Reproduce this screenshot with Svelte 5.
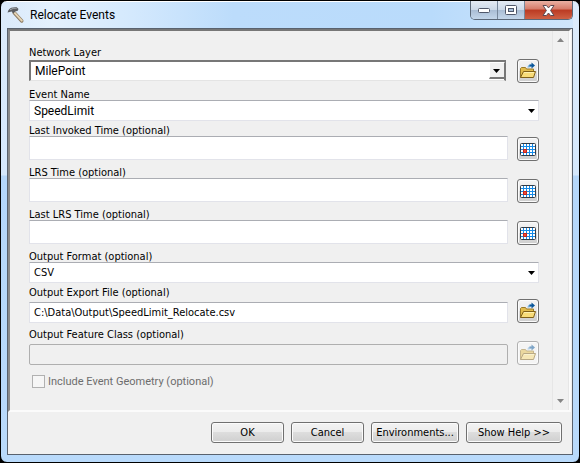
<script>
  let layer = $state('MilePoint');
  let eventName = $state('SpeedLimit');
  let format = $state('CSV');
  let exportFile = $state('C:\\Data\\Output\\SpeedLimit_Relocate.csv');
  let times = $state([
    { id: 'invoked', label: 'Last Invoked Time (optional)', value: '' },
    { id: 'lrs', label: 'LRS Time (optional)', value: '' },
    { id: 'last-lrs', label: 'Last LRS Time (optional)', value: '' }
  ]);
</script>

{#snippet folder()}
  <svg width="18" height="18" viewBox="0 0 18 18" aria-hidden="true">
    <path d="M1.5 15.5V6.5l1-1h4l1 1.5h7v3" fill="#e3bd4c" stroke="#9a7a2a" />
    <path d="M1.5 15.5 4.5 9.5h12l-2 6z" fill="#f8dc79" stroke="#806018" stroke-linejoin="round" />
    <path d="M5 10.5h10" stroke="#fff1b0" />
    <path d="M9.5 5.5C9.5 3.8 10.5 3.5 12 3.5" fill="none" stroke="#7db4de" stroke-width="2" />
    <path d="M10.5 2.5h2V.5l3.5 3-3.5 3v-2h-2z" fill="#08569b" />
  </svg>
{/snippet}

{#snippet calendar()}
  <svg width="16" height="13" viewBox="0 0 16 13" aria-hidden="true">
    <rect x=".5" y=".5" width="15" height="12" rx="1" fill="#fff" stroke="#303b47" />
    <path d="M3.5 1v11M6.5 1v11M9.5 1v11M12.5 1v11M1 3.5h14M1 6.5h14M1 9.5h14" stroke="#168be8" fill="none" />
    <rect x="3.5" y="6.5" width="3" height="3" fill="#f04a3a" stroke="#c5281c" />
  </svg>
{/snippet}

{#snippet arrow()}
  <svg class="arrow" width="7" height="4" viewBox="0 0 7 4" aria-hidden="true">
    <path d="M0 0h7L3.5 4z" fill="#000" />
  </svg>
{/snippet}

<main class="window">
  <header>
    <svg class="hammer" width="18" height="18" viewBox="0 0 18 18" aria-hidden="true">
      <path d="M7 6.5 14.8 15" stroke="#8b7a62" stroke-width="3.4" stroke-linecap="round" />
      <path d="M7.4 6.6 14.8 14.6" stroke="#e6d5b5" stroke-width="2" stroke-linecap="round" />
      <path d="M.5 6.5C1.5 3 3.5 1.7 6 1.5l3.5-.5 2 2-1 2-2.2.2L6.6 7.6 4.7 5.6z" fill="#5b5e62" />
      <path d="M3 3.8 6.2 2.4l3.6-.3" fill="none" stroke="#a5a9ad" />
    </svg>
    <h1>Relocate Events</h1>
    <div class="caption">
      <button aria-label="Minimize">
        <svg width="12" height="5" viewBox="0 0 12 5"><rect x=".5" y=".5" width="11" height="4" rx="1" fill="#fff" stroke="#50586a" /></svg>
      </button>
      <button aria-label="Maximize">
        <svg width="12" height="10" viewBox="0 0 12 10">
          <rect x=".5" y=".5" width="11" height="9" rx="1" fill="#fff" stroke="#50586a" />
          <rect x="3.5" y="3.5" width="5" height="3" fill="#a9bfd8" stroke="#50586a" />
        </svg>
      </button>
      <button class="close" aria-label="Close">
        <svg width="13" height="11" viewBox="0 0 13 11">
          <path d="M1 .5h3.4l2.1 2.4L8.6 .5H12L8.6 5.5 12 10.5H8.6L6.5 8 4.4 10.5H1L4.4 5.5z" fill="#fff" stroke="#5c4a52" />
        </svg>
      </button>
    </div>
  </header>

  <form class="client" onsubmit={(e) => e.preventDefault()}>
    <div class="panel">
      <div class="fields">
        <div class="row">
          <label for="layer">Network Layer</label>
          <div class="line">
            <div class="choice sunken">
              <select id="layer" class="large" bind:value={layer}><option>MilePoint</option></select>
              <span class="drop">{@render arrow()}</span>
            </div>
            <button class="tool" type="button" aria-label="Browse network layer">{@render folder()}</button>
          </div>
        </div>

        <div class="row compact">
          <label for="event">Event Name</label>
          <div class="choice">
            <select id="event" class="large" bind:value={eventName}><option>SpeedLimit</option></select>
            {@render arrow()}
          </div>
        </div>

        {#each times as time (time.id)}
          <div class="row">
            <label for={time.id}>{time.label}</label>
            <div class="line">
              <input class="tall" id={time.id} type="text" bind:value={time.value} />
              <button class="tool" type="button" aria-label="Pick date">{@render calendar()}</button>
            </div>
          </div>
        {/each}

        <div class="row compact">
          <label for="format">Output Format (optional)</label>
          <div class="choice">
            <select id="format" bind:value={format}><option>CSV</option></select>
            {@render arrow()}
          </div>
        </div>

        <div class="row">
          <label for="export">Output Export File (optional)</label>
          <div class="line">
            <input id="export" type="text" bind:value={exportFile} />
            <button class="tool" type="button" aria-label="Browse export file">{@render folder()}</button>
          </div>
        </div>

        <div class="row">
          <label for="feature">Output Feature Class (optional)</label>
          <div class="line">
            <input id="feature" type="text" disabled />
            <button class="tool" type="button" aria-label="Browse feature class" disabled>{@render folder()}</button>
          </div>
        </div>

        <label class="check">
          <input type="checkbox" disabled />
          <span>Include Event Geometry (optional)</span>
        </label>
      </div>

      <div class="scroll">
        <svg width="7" height="4" viewBox="0 0 7 4" aria-hidden="true"><path d="M0 4h7L3.5 0z" fill="#858585" /></svg>
        <svg width="7" height="4" viewBox="0 0 7 4" aria-hidden="true"><path d="M0 0h7L3.5 4z" fill="#858585" /></svg>
      </div>
    </div>

    <footer>
      <button class="push" type="submit">OK</button>
      <button class="push" type="button">Cancel</button>
      <button class="push wide" type="button">Environments...</button>
      <button class="push help" type="button">Show Help &gt;&gt;</button>
    </footer>
  </form>
</main>

<style>
  :global(body) {
    margin: 0;
    background: #000;
  }
  * {
    box-sizing: border-box;
  }
  .window {
    display: flex;
    flex-direction: column;
    min-height: 100vh;
    padding: 0 6px 7px;
    border: 1px solid #000;
    border-radius: 7px;
    background:
      linear-gradient(#fff, #fff) top / 100% 1px no-repeat,
      linear-gradient(#dcebfb 0, #d5e8fc 174px, #b5d7fa 175px, #b9dafb 100%);
    font: 11px/12px "DejaVu Sans Condensed", "Noto Sans", sans-serif;
    color: #000;
  }
  header {
    display: flex;
    align-items: flex-start;
    height: 27px;
    background: linear-gradient(90deg, #e4f1fd00, #e4f1fd 8%, #d4e9fd 22%, #bcdcfb 40%, #b9dbfb 75%, #cfe5fb);
    background-size: 100% 26px;
    background-position: 0 1px;
    background-repeat: no-repeat;
  }
  .hammer {
    margin: 5px 5px 0 0;
  }
  h1 {
    flex: 1;
    margin: 5px 0 0;
    font: 12px/18px Roboto, sans-serif;
  }
  .caption {
    display: flex;
    height: 19px;
    border: 1px solid #5b6878;
    border-top: 0;
    border-radius: 0 0 5px 5px;
    overflow: hidden;
  }
  .caption button {
    display: grid;
    place-items: center;
    width: 27px;
    padding: 0;
    border: 0;
    border-right: 1px solid #76879b;
    background: linear-gradient(#e4ebf4, #ccd9e8 48%, #a9bdd4 50%, #c3d6ea);
  }
  .caption .close {
    width: 47px;
    border: 0;
    background: linear-gradient(#e9b0a3, #d57b69 45%, #bb3a22 50%, #cf6144);
  }
  .client {
    display: flex;
    flex: 1;
    flex-direction: column;
    border: 1px solid #59626e;
    background: #f0f0f0;
  }
  .panel {
    display: flex;
    flex: 1;
    margin-right: 1px;
    border: 2px solid #fbfbfb;
    border-top-color: #777;
    border-left-color: #8b8b8b;
  }
  .fields {
    flex: 1;
    padding: 15px 13px 12px 19px;
  }
  .row {
    display: flex;
    flex-direction: column;
    height: 42px;
  }
  .row.compact {
    height: 36px;
  }
  .row > label {
    height: 12px;
    line-height: 14px;
  }
  .line {
    display: flex;
    gap: 9px;
    height: 25px;
    align-items: flex-end;
  }
  .line > input,
  .line > .choice {
    flex: 1;
    min-width: 0;
    margin-bottom: 2px;
  }
  .line > .tall {
    height: 24px;
    margin-bottom: 1px;
  }
  input[type="text"],
  select {
    height: 21px;
    margin: 0;
    padding: 0 4px;
    border: 1px solid #e2e3ea;
    border-top-color: #abadb3;
    border-radius: 0;
    background: #fff;
    font: inherit;
    color: #000;
  }
  input[type="text"]:disabled {
    border-color: #afafaf;
    border-radius: 2px;
    background: #f0f0f0;
  }
  select {
    appearance: none;
    width: 100%;
  }
  select.large {
    font: 12px/16px Roboto, sans-serif;
  }
  .choice {
    position: relative;
    height: 21px;
  }
  .arrow {
    position: absolute;
    top: 9px;
    right: 4px;
    pointer-events: none;
  }
  .sunken {
    margin-right: 2px;
  }
  .sunken select {
    border: 2px solid #777;
    border-bottom: 1px solid #e4e4e4;
  }
  .drop {
    position: absolute;
    top: 2px;
    right: 1px;
    width: 16px;
    height: 17px;
    border: 1px solid #fff;
    border-right: 1px solid #777;
    border-bottom: 2px solid #777;
    background: #f0f0f0;
    pointer-events: none;
  }
  .drop .arrow {
    top: 6px;
  }
  .tool {
    display: grid;
    place-items: center;
    width: 22px;
    height: 24px;
    padding: 0;
  }
  .tool,
  .push {
    border: 1px solid #707070;
    border-radius: 3px;
    background: linear-gradient(#f3f3f3, #ebebeb 49%, #dddddd 50%, #cfcfcf);
    box-shadow: inset 0 0 0 1px #fbfbfb;
  }
  .tool:disabled {
    border-color: #b0b0b0;
    background: #f4f4f4;
  }
  .tool:disabled svg {
    opacity: 0.5;
  }
  .check {
    display: flex;
    align-items: center;
    gap: 3px;
    margin: 5px 0 0 3px;
    font-family: Roboto, sans-serif;
    color: #6d6d6d;
  }
  .check input {
    appearance: none;
    width: 13px;
    height: 13px;
    margin: 0;
    border: 1px solid #b1b1b1;
    border-radius: 0;
    background: #f6f6f6;
  }
  .scroll {
    display: flex;
    flex-direction: column;
    align-items: center;
    justify-content: space-between;
    width: 17px;
    padding: 7px 0;
    border: solid #e6e6e6;
    border-width: 0 1px;
    background: #f1f1f1;
  }
  footer {
    display: flex;
    justify-content: flex-end;
    gap: 7px;
    padding: 10px 10px 11px;
  }
  .push {
    width: 73px;
    height: 21px;
    padding: 0;
    font: inherit;
    color: #000;
  }
  .wide {
    width: 88px;
  }
  .help {
    width: 96px;
  }
</style>
